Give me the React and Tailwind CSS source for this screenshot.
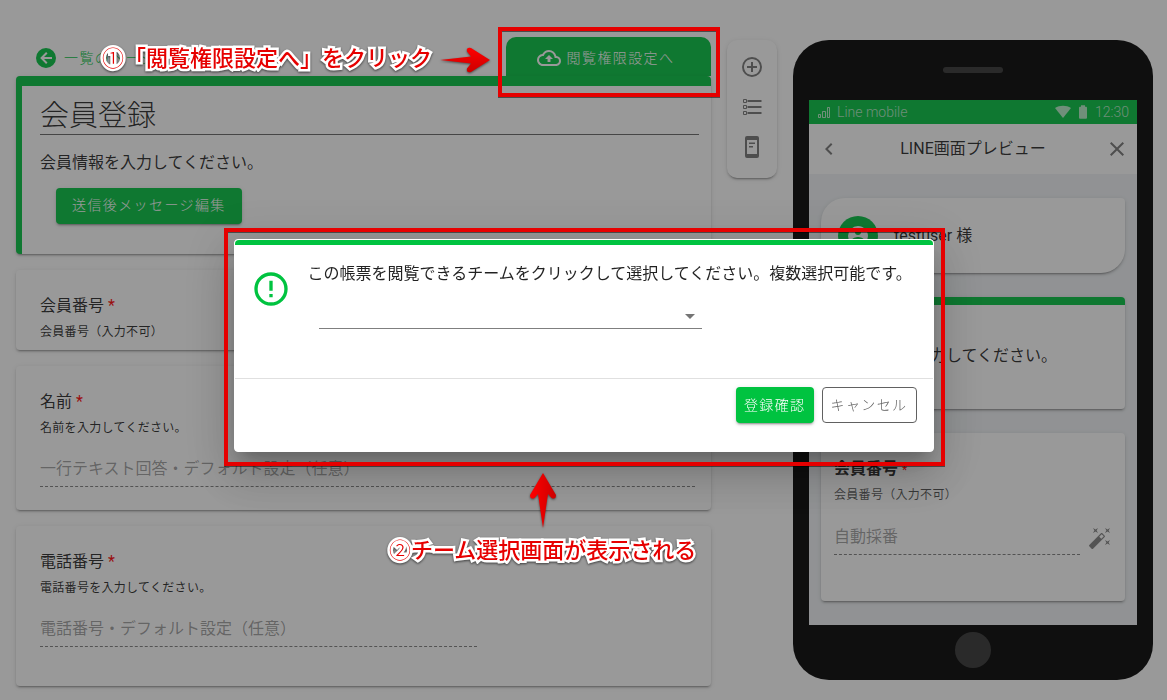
import React from "react";
import { MdOutlineBackup } from "react-icons/md";

const icons = {
  alert: "M11,15H13V17H11V15M11,7H13V13H11V7M12,2C6.47,2 2,6.5 2,12A10,10 0 0,0 12,22A10,10 0 0,0 22,12A10,10 0 0,0 12,2M12,20A8,8 0 0,1 4,12A8,8 0 0,1 12,4A8,8 0 0,1 20,12A8,8 0 0,1 12,20Z",
  close: "M19,6.41L17.59,5L12,10.59L6.41,5L5,6.41L10.59,12L5,17.59L6.41,19L12,13.41L17.59,19L19,17.59L13.41,12L19,6.41Z",
  chevronLeft: "M15.41,16.58L10.83,12L15.41,7.41L14,6L8,12L14,18L15.41,16.58Z",
  menuDown: "M7,10L12,15L17,10H7Z",
  plusCircle: "M12,20C7.59,20 4,16.41 4,12C4,7.59 7.59,4 12,4C16.41,4 20,7.59 20,12C20,16.41 16.41,20 12,20M12,2A10,10 0 0,0 2,12A10,10 0 0,0 12,22A10,10 0 0,0 22,12A10,10 0 0,0 12,2M13,7H11V11H7V13H11V17H13V13H17V11H13V7Z",
  backCircle: "M2,12A10,10 0 0,1 12,2A10,10 0 0,1 22,12A10,10 0 0,1 12,22A10,10 0 0,1 2,12M18,11H10L13.5,7.5L12.08,6.08L6.16,12L12.08,17.92L13.5,16.5L10,13H18V11Z",
  wand: "M7.5,5.6L5,7L6.4,4.5L5,2L7.5,3.4L10,2L8.6,4.5L10,7L7.5,5.6M19.5,15.4L22,14L20.6,16.5L22,19L19.5,17.6L17,19L18.4,16.5L17,14L19.5,15.4M22,2L20.6,4.5L22,7L19.5,5.6L17,7L18.4,4.5L17,2L19.5,3.4L22,2M13.34,12.78L15.78,10.34L13.66,8.22L11.22,10.66L13.34,12.78M14.37,7.29L16.71,9.63C17.1,10 17.1,10.65 16.71,11.04L5.04,22.71C4.65,23.1 4,23.1 3.63,22.71L1.29,20.37C0.9,20 0.9,19.35 1.29,18.96L12.96,7.29C13.35,6.9 14,6.9 14.37,7.29Z",
  phoneText: "M7,1H17A2,2 0 0,1 19,3V21A2,2 0 0,1 17,23H7A2,2 0 0,1 5,21V3A2,2 0 0,1 7,1M7,5V19H17V5ZM9,7.5H15V9H9ZM9,11H13V12.5H9Z",
  wifi: "M12,21L0,6C3.4,3.6 7.5,2.5 12,2.5S20.6,3.6 24,6Z",
  battery: "M16.5,4H15V2H9V4H7.5A1.5,1.5 0 0,0 6,5.5V20.5A1.5,1.5 0 0,0 7.500,22H16.5A1.5,1.5 0 0,0 18,20.5V5.5A1.5,1.5 0 0,0 16.5,4Z",
  account: "M12,19.2C9.5,19.2 7.29,17.92 6,16C6.03,14 10,12.9 12,12.9C14,12.9 17.97,14 18,16C16.71,17.92 14.5,19.2 12,19.2M12,5A3,3 0 0,1 15,8A3,3 0 0,1 12,11A3,3 0 0,1 9,8A3,3 0 0,1 12,5M12,2A10,10 0 0,0 2,12A10,10 0 0,0 12,22A10,10 0 0,0 22,12C22,6.47 17.5,2 12,2Z",
};

function Icon({ name, className }) {
  return (
    <svg viewBox="0 0 24 24" fill="currentColor" fillRule="evenodd" aria-hidden="true" className={`shrink-0 ${className}`}>
      <path d={icons[name]} />
    </svg>
  );
}

const elevation = "shadow-[0_3px_1px_-2px_rgba(0,0,0,0.2),0_2px_2px_0_rgba(0,0,0,0.14),0_1px_5px_0_rgba(0,0,0,0.12)]";

function FieldCard({ id, title, note, placeholder, wide }) {
  const padding = !placeholder ? "pb-1.5" : wide ? "pb-[23px]" : "pb-[39px]";
  return (
    <section className={`rounded bg-white pt-6 pr-4 pl-6 ${padding} ${elevation}`}>
      <label htmlFor={id} className="block text-base leading-6">
        {title} <span className="text-[#ff0000]">*</span>
      </label>
      <p className="pt-0.5 text-xs leading-6 tracking-wide">{note}</p>
      {placeholder && (
        <div>
          <input
            id={id}
            disabled
            placeholder={placeholder}
            className={`mt-4 h-[31px] border-b border-dashed border-black/50 bg-transparent pb-1.5 text-base placeholder:text-black/40 ${wide ? "w-full" : "w-2/3"}`}
          />
        </div>
      )}
    </section>
  );
}

function Editor() {
  return (
    <main className="min-w-0 flex-1">
      <div className="flex items-end justify-between pl-[18px]">
        <a href="#list" className="flex h-9 items-center gap-1.5 text-sm font-light tracking-widest text-[#00c340]">
          <Icon name="backCircle" className="size-6" />
          一覧のページへ
        </a>
        <button className="flex h-[39px] w-[205px] items-center justify-center gap-1.5 rounded-t-[10px] bg-[#00c340] pt-0.5 pr-1.5 text-sm font-light tracking-widest text-white">
          <MdOutlineBackup className="size-6" />
          閲覧権限設定へ
        </button>
      </div>
      <div className="flex flex-col gap-4">
        <section className={`rounded border-t-[10px] border-l-[6px] border-[#00c340] bg-white pt-3 pr-3 pb-[30px] pl-[18px] ${elevation}`}>
          <h1 className="border-b border-black/60 text-[29px] leading-9 font-light">会員登録</h1>
          <p className="pt-4 pb-[13px] text-base leading-6">会員情報を入力してください。</p>
          <button className={`ml-4 h-9 rounded bg-[#00c340] px-4 pb-0.5 text-sm font-light tracking-widest text-white ${elevation}`}>
            送信後メッセージ編集
          </button>
        </section>
        <FieldCard id="member" title="会員番号" note="会員番号（入力不可）" />
        <FieldCard id="name" title="名前" note="名前を入力してください。" placeholder="一行テキスト回答・デフォルト設定（任意）" wide />
        <FieldCard id="tel" title="電話番号" note="電話番号を入力してください。" placeholder="電話番号・デフォルト設定（任意）" />
      </div>
    </main>
  );
}

function Toolbar() {
  return (
    <aside className={`mt-[3px] flex w-[50px] flex-col items-center gap-4 rounded-[10px] bg-white pt-[15px] pb-[19px] text-[#757575] ${elevation}`}>
      <button aria-label="項目を追加" className="flex"><Icon name="plusCircle" className="size-6" /></button>
      <button aria-label="項目一覧" className="flex">
        <svg viewBox="0 0 24 24" fill="none" stroke="currentColor" aria-hidden="true" className="size-6">
          <path strokeWidth="2" d="M7.500 6H21.500M7.500 12H21.500M7.500 18H21.500" />
          <path strokeWidth="1" d="M3.500 4.500H6.500V7.500H3.500ZM3.500 10.500H6.500V13.500H3.500ZM3.500 16.500H6.500V19.500H3.500Z" />
        </svg>
      </button>
      <button aria-label="プレビュー" className="flex"><Icon name="phoneText" className="size-6" /></button>
    </aside>
  );
}

function Phone() {
  return (
    <div className="mt-[3px] flex w-[360px] shrink-0 flex-col items-center rounded-[36px] bg-black px-4">
      <div className="mt-[27px] h-1.5 w-[60px] rounded-full bg-[#333]" />
      <div className="mt-[27px] w-full bg-[#f0f3f6]">
        <div className="flex h-6 items-center justify-between bg-[#00c340] px-2 text-sm font-light text-white/70">
          <div className="flex items-center gap-1.5">
            <svg viewBox="0 0 14 14" fill="none" stroke="currentColor" aria-hidden="true" className="size-3.5">
              <path d="M1.500 9.500H3.500V12.500H1.500ZM5.500 6.500H8.500V12.500H5.500ZM10.500 2.500H12.500V12.500H10.500Z" />
            </svg>
            <span>Line mobile</span>
          </div>
          <div className="flex items-center gap-1">
            <Icon name="wifi" className="size-4" />
            <Icon name="battery" className="size-4" />
            <span>12:30</span>
          </div>
        </div>
        <header className="flex h-[50px] items-center justify-between bg-white px-2 text-[#757575]">
          <button aria-label="戻る" className="flex"><Icon name="chevronLeft" className="size-6" /></button>
          <h2 className="text-base text-black/87">LINE画面プレビュー</h2>
          <button aria-label="閉じる" className="flex"><Icon name="close" className="size-6" /></button>
        </header>
        <div className="flex flex-col gap-6 px-3 py-6">
          <div className={`flex h-[75px] items-center gap-4 rounded-3xl rounded-tr bg-white px-[17px] ${elevation}`}>
            <span className="flex size-10 items-center justify-center rounded-full bg-[#00c340] text-white">
              <Icon name="account" className="size-6" />
            </span>
            <span>testuser 様</span>
          </div>
          <div className={`h-28 rounded border-t-8 border-[#00c340] bg-white px-[13px] pt-[39px] ${elevation}`}>
            会員情報を入力してください。
          </div>
          <div className={`h-[168px] rounded bg-white px-[13px] pt-6 ${elevation}`}>
            <label htmlFor="auto" className="block text-base leading-6 font-bold">
              会員番号 <span className="text-xs font-normal text-[#ff0000]">*</span>
            </label>
            <p className="pt-0.5 text-xs leading-6 tracking-wide text-black/70">会員番号（入力不可）</p>
            <div className="mt-3.5 flex items-center gap-2 text-black/50">
              <input id="auto" disabled placeholder="自動採番" className="h-[34px] w-[246px] border-b border-dashed border-black/50 pb-0.5 placeholder:text-black/40" />
              <Icon name="wand" className="size-6" />
            </div>
          </div>
        </div>
      </div>
      <div className="mt-[7px] mb-3 size-9 rounded-full bg-[#333]" />
    </div>
  );
}

function Dialog() {
  return (
    <div className="fixed inset-0 flex items-center justify-center bg-[#212121]/46 pb-[9px]">
      <div
        role="dialog"
        aria-modal="true"
        className="w-[700px] rounded border border-white bg-white shadow-[0_11px_15px_-7px_rgba(0,0,0,0.2),0_24px_38px_3px_rgba(0,0,0,0.14),0_9px_46px_8px_rgba(0,0,0,0.12)]"
      >
        <div className="rounded-t border-t-[5px] border-[#00c340]">
          <div className="flex items-start gap-[17px] border-b border-black/12 px-4 pt-[17px] pb-[49px]">
            <Icon name="alert" className="mt-[7px] size-10 text-[#00c340]" />
            <div className="flex-1">
              <label htmlFor="team" className="block text-base leading-6">
                この帳票を閲覧できるチームをクリックして選択してください。複数選択可能です。
              </label>
              <div className="mt-[17px] ml-[11px] flex w-[383px] items-end border-b border-black/50 text-[#757575]">
                <select id="team" className="h-[25px] flex-1 appearance-none bg-transparent" />
                <Icon name="menuDown" className="size-6" />
              </div>
            </div>
          </div>
        </div>
        <div className="flex justify-end gap-2 px-4 pt-2 pb-7">
          <button className={`h-9 rounded bg-[#00c340] px-2 text-sm font-light tracking-widest text-white ${elevation}`}>登録確認</button>
          <button className="h-9 rounded border border-[#616161] px-2 text-sm font-light tracking-widest text-[#616161]">キャンセル</button>
        </div>
      </div>
    </div>
  );
}

const noteText =
  "absolute text-[22px] leading-8 font-medium whitespace-nowrap text-[#e60000] [-webkit-text-stroke:5px_white] [paint-order:stroke_fill] drop-shadow-[0_1px_1px_rgba(0,0,0,0.6)]";
const frame = "absolute border-4 border-[#e60000] drop-shadow-[0_1px_0_rgba(0,0,0,0.5)]";

function Annotations() {
  return (
    <div className="pointer-events-none absolute inset-0">
      <div className={`${frame} top-[27px] left-[498px] h-[70px] w-[222px]`} />
      <div className={`${frame} top-[228px] left-[224px] h-[238px] w-[721px]`} />
      <p className={`${noteText} top-[43px] left-[102px]`}><span className="font-light">①</span>「閲覧権限設定へ」をクリック</p>
      <p className={`${noteText} top-[535px] left-[389px]`}><span className="font-light">②</span>チーム選択画面が表示される</p>
      <svg viewBox="0 0 50 26" aria-hidden="true" className="absolute top-[47px] left-[440px] h-[26px] w-[50px] drop-shadow-[0_1px_1px_rgba(0,0,0,0.5)]">
        <defs>
          <linearGradient id="right" x1="0" y1="0" x2="0" y2="1">
            <stop offset="0" stopColor="#ff0000" />
            <stop offset="1" stopColor="#cc0000" />
          </linearGradient>
        </defs>
        <path fill="url(#right)" d="M0 13L31 9.500L27 4.500Q26 0 31 1L50 13L31 25Q26 26 27 21.500L31 16.500Z" />
      </svg>
      <svg viewBox="0 0 26 55" aria-hidden="true" className="absolute top-[473px] left-[530px] h-[55px] w-[26px] drop-shadow-[0_1px_1px_rgba(0,0,0,0.5)]">
        <defs>
          <linearGradient id="up" x1="0" y1="0" x2="1" y2="0">
            <stop offset="0" stopColor="#ff0000" />
            <stop offset="1" stopColor="#cc0000" />
          </linearGradient>
        </defs>
        <path fill="url(#up)" d="M13 55L8 21L4.500 25Q0 27 0 22L13 0L26 22Q26 27 21.500 25L18 21Z" />
      </svg>
    </div>
  );
}

export default function App() {
  return (
    <div className="relative min-h-screen bg-white font-['Roboto','Noto_Sans_CJK_JP',sans-serif] text-black/87">
      <div className="flex items-start gap-4 pt-[37px] pr-3.5 pb-3.5 pl-4">
        <Editor />
        <Toolbar />
        <Phone />
      </div>
      <Dialog />
      <Annotations />
    </div>
  );
}
